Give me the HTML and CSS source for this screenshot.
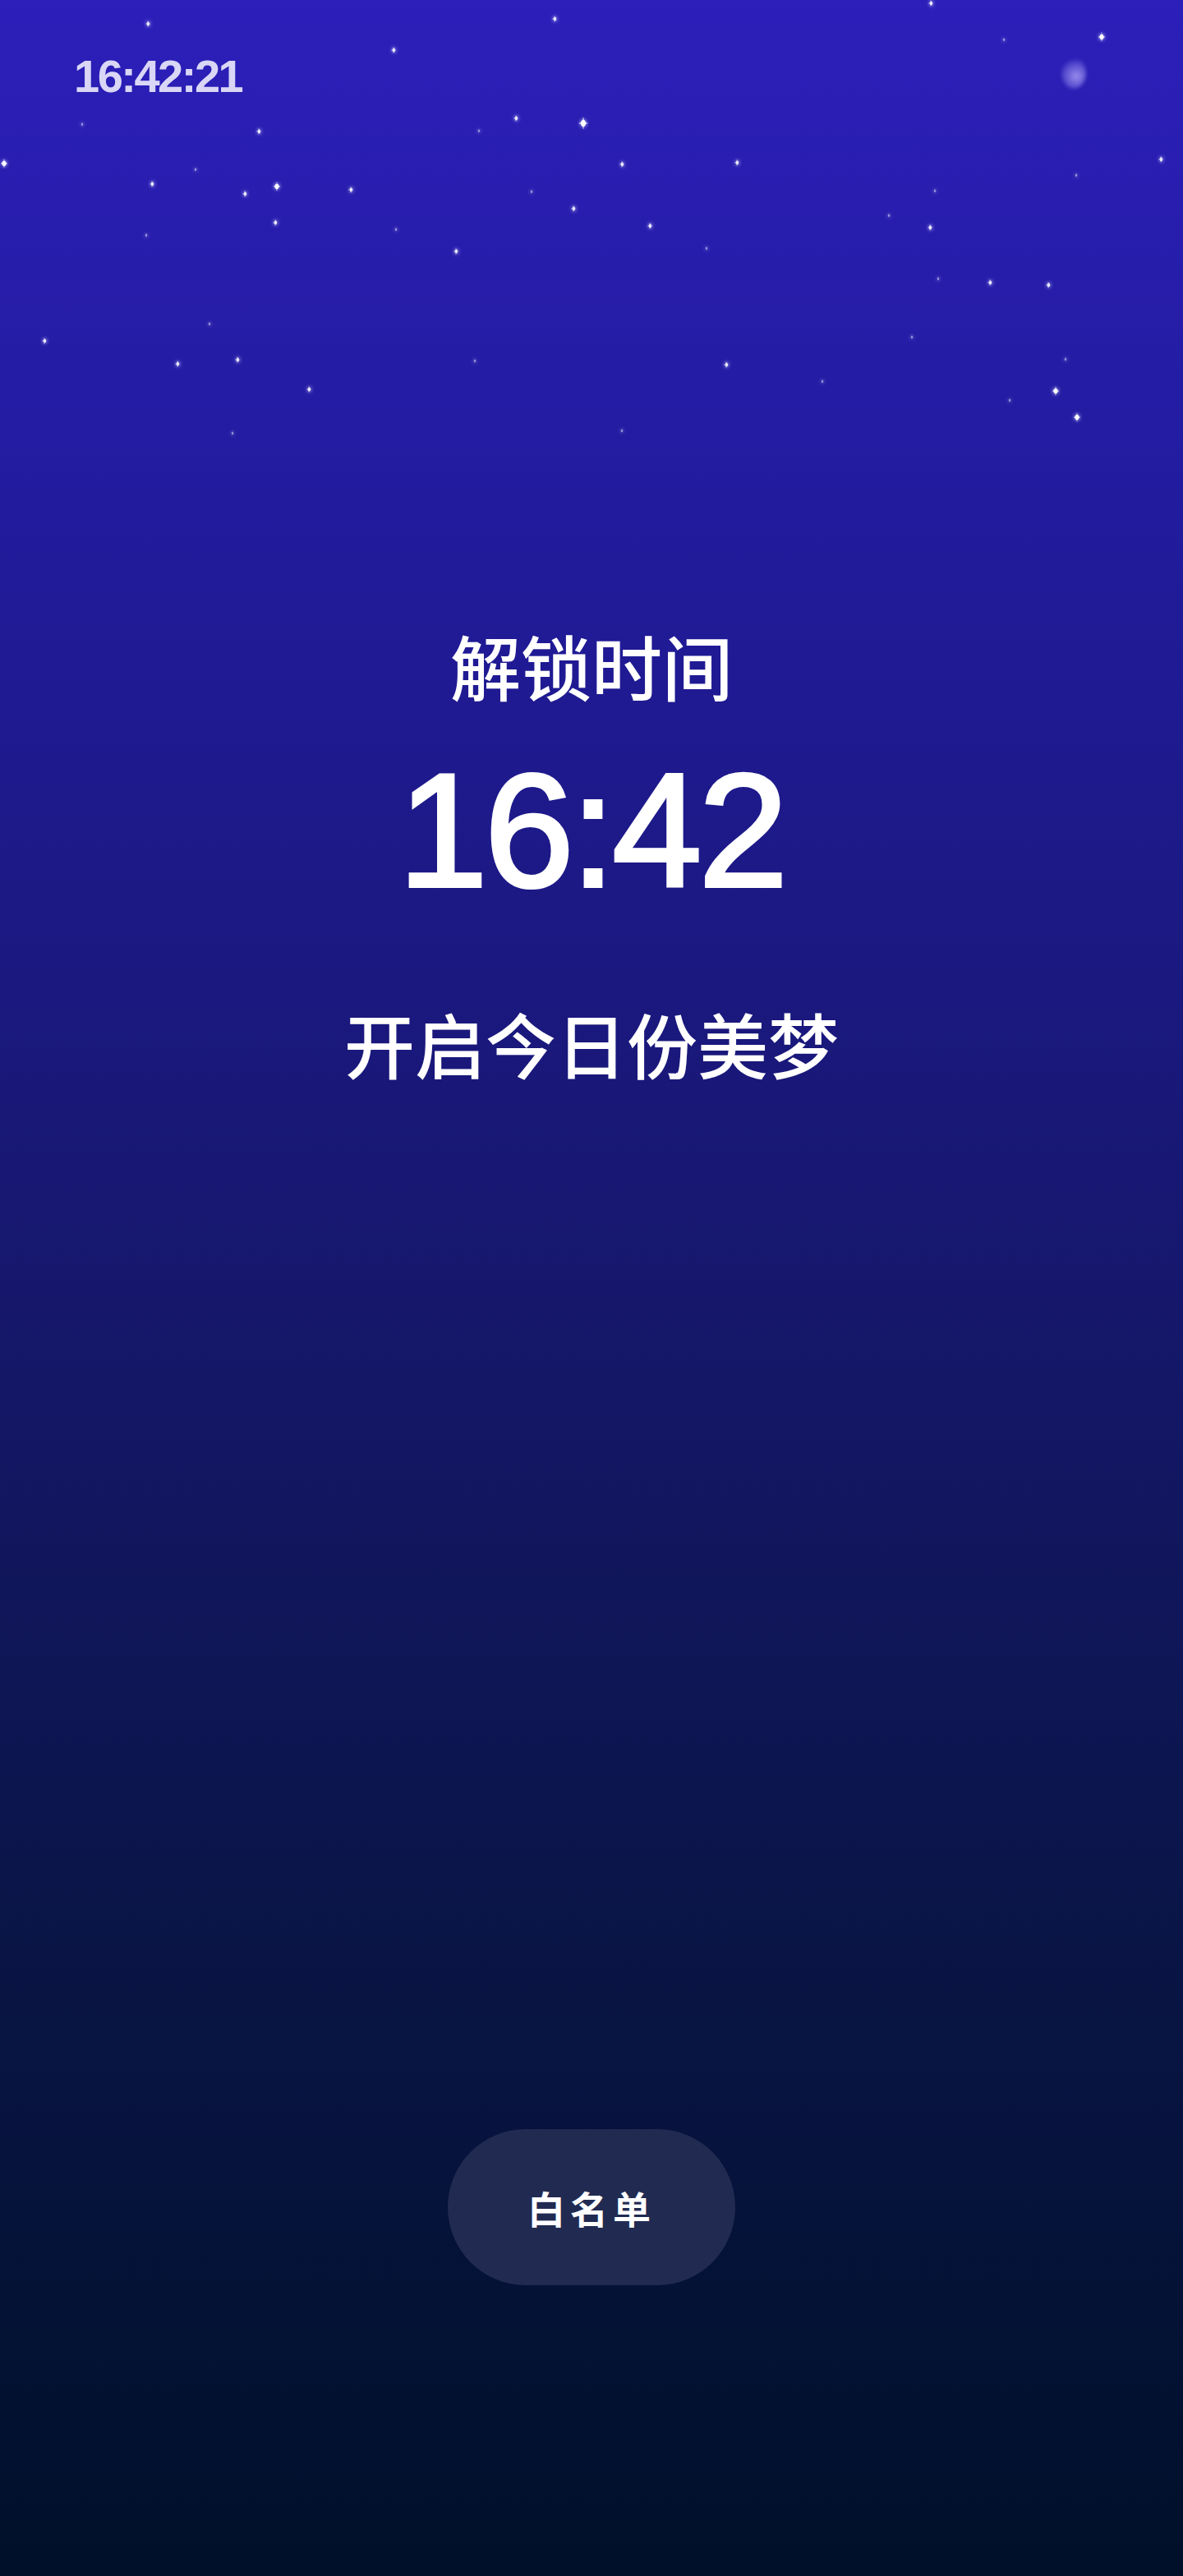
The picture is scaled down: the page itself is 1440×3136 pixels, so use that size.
FILE: index.html
```html
<!DOCTYPE html>
<html>
<head>
<title>解锁时间</title>
<meta charset="utf-8">
<link rel="stylesheet" href="styles.css">
</head>
<body>

<div class="screen">
	<div class="sky" id="sky">
		<div class="moon"></div>
	</div>

	<div class="topbar">
		<span class="clock" id="clock">16:42:21</span>
	</div>

	<div class="unlock">
		<p class="label">解锁时间</p>
		<p class="time">16:42</p>
		<p class="slogan">开启今日份美梦</p>
	</div>

	<div class="bottom">
		<button class="whitelist">白名单</button>
	</div>
</div>

<script type="text/javascript">

// 星星：x, y, 大小(1-4)
var stars = [
	[180,29,3],[479,61,3],[710,150,1],[675,23,3],[100,151,4],[315,160,3],
	[628,144,3],[583,159,4],[5,199,2],[238,206,4],[185,224,3],[337,227,2],
	[298,236,3],[427,231,3],[647,233,4],[698,254,3],[335,271,3],[482,279,4],
	[178,286,4],[1133,4,3],[1341,45,2],[1222,48,4],[757,200,3],[897,198,3],
	[1413,194,3],[1310,213,4],[1138,232,4],[1082,262,4],[791,275,3],[1132,277,3],
	[555,306,3],[860,302,4],[1142,339,4],[1205,344,3],[1276,347,3],[255,394,4],
	[54,415,3],[1110,410,4],[289,438,3],[216,443,3],[578,439,4],[884,444,3],
	[1297,437,4],[1001,464,4],[376,474,3],[1285,476,2],[1229,487,4],[1311,508,2],
	[283,527,4],[757,524,4]
];

var sky = document.getElementById("sky");

for (var i = 0; i < stars.length; i++) {
	var s = document.createElement("div");
	s.className = "star s" + stars[i][2];
	s.style.left = stars[i][0] + "px";
	s.style.top  = stars[i][1] + "px";
	sky.appendChild(s);
};

</script>
</body>
</html>
```

FILE: styles.css
```css
* {
	box-sizing: border-box;
}

body {
	margin: 0;
	font-family: "Liberation Sans", "Noto Sans CJK SC", sans-serif;
	color: #fff;
}

.screen {
	position: relative;
	min-height: 3136px;
	display: flex;
	flex-direction: column;
	background: linear-gradient(180deg, #2c1fba 0%, #221b9d 20%, #16176c 50%, #0b1549 73%, #001029 100%);
	overflow: hidden;
}

/*******星空**********/
.sky {
	position: absolute;
	top: 0;
	left: 0;
	width: 100%;
	height: 600px;
}

.star {
	position: absolute;
	transform: translate(-50%, -50%);
}

.star::before {
	content: "";
	position: absolute;
	inset: 0;
	background: #fff;
	clip-path: polygon(50% 0, 60% 40%, 100% 50%, 60% 60%, 50% 100%, 40% 60%, 0 50%, 40% 40%);
}

.star::after {
	content: "";
	position: absolute;
	left: 25%;
	top: 25%;
	width: 50%;
	height: 50%;
	border-radius: 50%;
	background: #fff;
	box-shadow: 0 0 4px 1px rgba(200, 200, 255, 0.7);
}

.s1 { width: 12px; height: 16px; }
.s2 { width: 9px;  height: 12px; }
.s3 { width: 6px;  height: 9px; opacity: 0.9; }
.s4 { width: 4px;  height: 6px; opacity: 0.55; }

.moon {
	position: absolute;
	left: 1292px;
	top: 70px;
	width: 30px;
	height: 38px;
	border-radius: 50%;
	background: radial-gradient(circle at 60% 60%, rgba(190, 180, 255, 0.75), rgba(140, 130, 240, 0.3) 60%, transparent 75%);
	filter: blur(2px);
}

/*******顶部时钟**********/
.topbar {
	position: relative;
	padding: 61px 0 0 90px;
}

.clock {
	font-size: 56px;
	line-height: 64px;
	font-weight: bold;
	letter-spacing: -2.5px;
	color: #d9d6f6;
}

/*******解锁时间**********/
.unlock {
	position: relative;
	display: flex;
	flex-direction: column;
	align-items: center;
	margin-top: 641px;
}

.unlock p {
	margin: 0;
}

.unlock .label,
.unlock .slogan {
	font-family: "Noto Sans CJK SC", sans-serif;
	font-size: 86px;
	line-height: 88px;
	font-weight: 500;
}

.unlock .time {
	margin-top: 60px;
	font-size: 196px;
	line-height: 196px;
	letter-spacing: -4px;
	-webkit-text-stroke: 4px #fff;
}

.unlock .slogan {
	margin-top: 116px;
}

/*******白名单按钮**********/
.bottom {
	position: relative;
	margin-top: auto;
	padding-bottom: 354px;
	display: flex;
	justify-content: center;
}

.whitelist {
	width: 350px;
	height: 190px;
	border: 0;
	border-radius: 95px;
	background-color: #212b52;
	color: #fff;
	font-family: "Noto Sans CJK SC", sans-serif;
	font-size: 46px;
	font-weight: bold;
	letter-spacing: 6px;
	padding-left: 6px;
}
```
